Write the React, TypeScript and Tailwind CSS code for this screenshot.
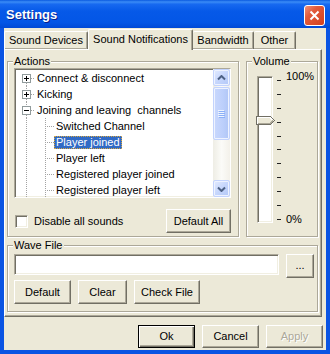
import React from 'react';

const dot = '#A3A3A3';

const raised =
  'border border-t-white border-l-white border-r-[#716F64] border-b-[#716F64] shadow-[inset_-1px_-1px_0_#ACA899]';
const sunken =
  'border border-t-[#ACA899] border-l-[#ACA899] border-r-white border-b-white shadow-[inset_1px_1px_0_#716F64,inset_-1px_-1px_0_#F1EFE2]';

const Btn: React.FC<{ children: React.ReactNode; className?: string; primary?: boolean; disabled?: boolean }> = ({
  children,
  className = '',
  primary = false,
  disabled = false,
}) => (
  <button
    type="button"
    className={`flex shrink-0 items-center justify-center bg-[#ECE9D8] text-[11px] leading-[13px] ${
      primary
        ? 'border border-black shadow-[inset_1px_1px_0_#fff,inset_-1px_-1px_0_#716F64,inset_-2px_-2px_0_#ACA899]'
        : raised
    } ${disabled ? 'text-[#ACA899] [text-shadow:1px_1px_0_#fff]' : 'text-black'} ${className}`}
  >
    {children}
  </button>
);

const RootGutter: React.FC<{ expanded?: boolean; first?: boolean }> = ({ expanded = false, first = false }) => (
  <svg width="19" height="16" className="shrink-0" shapeRendering="crispEdges">
    {!first && <line x1="10.5" y1="0" x2="10.5" y2="4" stroke={dot} strokeDasharray="1 1" />}
    <line x1="10.5" y1="13" x2="10.5" y2="16" stroke={dot} strokeDasharray="1 1" />
    <line x1="15" y1="8.5" x2="19" y2="8.5" stroke={dot} strokeDasharray="1 1" />
    <rect x="6.5" y="4.5" width="8" height="8" fill="white" stroke="#919B9C" />
    <line x1="8" y1="8.5" x2="13" y2="8.5" stroke="black" />
    {!expanded && <line x1="10.5" y1="6" x2="10.5" y2="11" stroke="black" />}
  </svg>
);

const ChildGutter: React.FC = () => (
  <svg width="38" height="16" className="shrink-0" shapeRendering="crispEdges">
    <line x1="10.5" y1="0" x2="10.5" y2="16" stroke={dot} strokeDasharray="1 1" />
    <line x1="29.5" y1="0" x2="29.5" y2="16" stroke={dot} strokeDasharray="1 1" />
    <line x1="31" y1="8.5" x2="38" y2="8.5" stroke={dot} strokeDasharray="1 1" />
  </svg>
);

const Row: React.FC<{ child?: boolean; expanded?: boolean; first?: boolean; selected?: boolean; label: string }> = ({
  child,
  expanded,
  first,
  selected,
  label,
}) => (
  <div className="flex h-[16px] shrink-0 items-center whitespace-pre">
    {child ? <ChildGutter /> : <RootGutter expanded={expanded} first={first} />}
    {selected ? (
      <span className="h-[13px] border border-dotted border-[#D9A63D] bg-[#316AC5] px-[1px] leading-[11px] text-white">
        {label}
      </span>
    ) : (
      <span className="h-[13px] px-[2px] leading-[13px]">{label}</span>
    )}
  </div>
);

const scrollBtn =
  'flex h-[17px] w-[17px] shrink-0 items-center justify-center rounded-[2px] border border-[#C3D3FD] bg-[linear-gradient(135deg,#E3EBFF_0%,#C6D6FC_50%,#B3C8F7_100%)] shadow-[inset_0_0_0_1px_#EEF3FF]';

const Arrow: React.FC<{ down?: boolean }> = ({ down }) => (
  <svg width="9" height="6" viewBox="0 0 9 6">
    <polyline
      points={down ? '1,1.5 4.5,5 8,1.5' : '1,4.5 4.5,1 8,4.5'}
      fill="none"
      stroke="#4D6185"
      strokeWidth="2"
    />
  </svg>
);

const Settings: React.FC = () => {
  return (
    <div className="flex h-[354px] w-[330px] flex-col overflow-hidden bg-[#0A54E3] font-['Liberation_Sans',Arial,sans-serif] text-[11px] leading-[13px] text-black">
      {/* title bar */}
      <div className="flex h-[28px] shrink-0 items-center justify-between bg-[linear-gradient(180deg,#0A5AE0_0%,#3B8CF6_7%,#1769F0_15%,#0659E8_40%,#0356E6_80%,#0049D6_100%)] pl-[6px] pr-[5px]">
        <span className="pt-[2px] text-[13px] font-bold leading-[16px] text-white [text-shadow:1px_1px_0_#0A1E8A]">
          Settings
        </span>
        <div className="mb-[2px] flex h-[21px] w-[21px] items-center justify-center self-end rounded-[3px] border border-white bg-[linear-gradient(135deg,#F0917A_0%,#E25A3B_35%,#D2401E_100%)]">
          <svg width="11" height="11" viewBox="0 0 11 11">
            <path d="M1.5 1.5 L9.5 9.5 M9.5 1.5 L1.5 9.5" stroke="white" strokeWidth="2" />
          </svg>
        </div>
      </div>

      {/* client area */}
      <div className="mx-[4px] mb-[4px] flex flex-1 flex-col bg-[#ECE9D8]">
        {/* tabs */}
        <div className="mt-[1px] flex h-[20px] shrink-0 items-end">
          <div className={`flex h-[18px] w-[84px] items-center justify-center rounded-t-[2px] ${raised} border-b-0`}>
            Sound Devices
          </div>
          <div className="relative z-10 -mb-px flex h-[21px] w-[105px] items-center justify-center rounded-t-[2px] border border-b-0 border-t-white border-l-white border-r-[#716F64] bg-[#ECE9D8] pb-[2px] shadow-[inset_-1px_0_0_#ACA899]">
            Sound Notifications
          </div>
          <div className={`flex h-[18px] w-[61px] items-center justify-center rounded-t-[2px] ${raised} border-b-0 border-l-0`}>
            Bandwidth
          </div>
          <div className={`flex h-[18px] w-[42px] items-center justify-center rounded-t-[2px] ${raised} border-b-0 border-l-0`}>
            Other
          </div>
        </div>

        {/* tab panel */}
        <div className={`flex h-[268px] w-[318px] shrink-0 flex-col pl-[2px] pt-[5px] ${raised}`}>
          <div className="flex gap-[7px]">
            {/* Actions */}
            <fieldset className="w-[232px] border border-[#ACA899] pb-[3px] pl-[6px] pr-[7px] shadow-[inset_1px_1px_0_#fff,1px_1px_0_#fff]">
              <legend className="-ml-px bg-[#ECE9D8] px-[1px] leading-[13px]">Actions</legend>
              <div className={`flex h-[130px] bg-white ${sunken}`}>
                <div className="flex flex-1 flex-col overflow-hidden pl-[1px] pt-[1px]">
                  <Row first label="Connect & disconnect" />
                  <Row label="Kicking" />
                  <Row expanded label="Joining and leaving  channels" />
                  <Row child label="Switched Channel" />
                  <Row child selected label="Player joined" />
                  <Row child label="Player left" />
                  <Row child label="Registered player joined" />
                  <Row child label="Registered player left" />
                </div>
                <div className="flex w-[17px] shrink-0 flex-col bg-[linear-gradient(90deg,#EEEDE5_0%,#FBFBF8_50%,#F3F1EA_100%)]">
                  <div className={scrollBtn}>
                    <Arrow />
                  </div>
                  <div className="flex-1 pt-[1px]">
                    <div className="flex h-[53px] w-[17px] items-center justify-center rounded-[2px] border border-[#C3D3FD] bg-[linear-gradient(90deg,#C9D8FD_0%,#BCCFFB_60%,#B0C6F6_100%)] shadow-[inset_0_0_0_1px_#EEF3FF]">
                      <svg width="7" height="8" viewBox="0 0 7 8" shapeRendering="crispEdges">
                        {[0, 2, 4, 6].map((y) => (
                          <g key={y}>
                            <line x1="0" y1={y + 0.5} x2="6" y2={y + 0.5} stroke="#EEF4FE" />
                            <line x1="1" y1={y + 1.5} x2="7" y2={y + 1.5} stroke="#8CB0F8" />
                          </g>
                        ))}
                      </svg>
                    </div>
                  </div>
                  <div className={scrollBtn}>
                    <Arrow down />
                  </div>
                </div>
              </div>
              <div className="mt-[11px] flex items-center justify-between">
                <div className="flex items-center">
                  <div className={`ml-[1px] h-[13px] w-[13px] bg-white ${sunken}`} />
                  <span className="ml-[6px]">Disable all sounds</span>
                </div>
                <Btn className="h-[24px] w-[65px]">Default All</Btn>
              </div>
            </fieldset>

            {/* Volume */}
            <fieldset className="w-[72px] border border-[#ACA899] pl-[6px] shadow-[inset_1px_1px_0_#fff,1px_1px_0_#fff]">
              <legend className="-ml-px bg-[#ECE9D8] px-[1px] leading-[13px]">Volume</legend>
              <div className="mt-[8px] flex items-start">
                <div className={`relative ml-[4px] h-[147px] w-[16px] bg-white ${sunken}`}>
                  <svg
                    width="19"
                    height="10"
                    viewBox="0 0 19 10"
                    className="absolute left-[-2px] top-[39px]"
                    shapeRendering="crispEdges"
                  >
                    <path d="M0.5 0.5 H14.5 L18.5 4.5 L14.5 8.5 H0.5 Z" fill="#ECE9D8" stroke="#716F64" />
                    <path d="M1.5 7.5 V1.5 H14 L17 4.5" fill="none" stroke="#FFFFFF" />
                    <path d="M1.5 7.5 H14 L17 4.5" fill="none" stroke="#ACA899" />
                  </svg>
                </div>
                <div className="ml-[4px] mt-[4px] flex h-[140px] flex-col justify-between">
                  {Array.from({ length: 11 }).map((_, i) => (
                    <div key={i} className="h-px w-[4px] bg-[#202020]" />
                  ))}
                </div>
                <div className="-mt-[6px] ml-[5px] flex h-[155px] flex-col justify-between leading-[12px]">
                  <span>100%</span>
                  <span>0%</span>
                </div>
              </div>
            </fieldset>
          </div>

          {/* Wave file */}
          <fieldset className="mt-[2px] w-[311px] border border-[#ACA899] pb-[7px] pl-[6px] shadow-[inset_1px_1px_0_#fff,1px_1px_0_#fff]">
            <legend className="-ml-px bg-[#ECE9D8] px-[1px] leading-[13px]">Wave File</legend>
            <div className="mt-[2px] flex items-start">
              <div className={`h-[21px] w-[265px] bg-white ${sunken}`} />
              <Btn className="ml-[7px] h-[24px] w-[28px] pb-[2px]">...</Btn>
            </div>
            <div className="mt-[2px] flex gap-[7px]">
              <Btn className="h-[24px] w-[57px]">Default</Btn>
              <Btn className="h-[24px] w-[49px]">Clear</Btn>
              <Btn className="h-[24px] w-[66px]">Check File</Btn>
            </div>
          </fieldset>
        </div>

        {/* dialog buttons */}
        <div className="mt-[8px] flex justify-end gap-[7px] pr-[3px]">
          <Btn primary className="h-[23px] w-[57px]">
            Ok
          </Btn>
          <Btn className="h-[23px] w-[57px]">Cancel</Btn>
          <Btn disabled className="h-[23px] w-[57px]">
            Apply
          </Btn>
        </div>
      </div>
    </div>
  );
};

export default function App() {
  return <Settings />;
}
